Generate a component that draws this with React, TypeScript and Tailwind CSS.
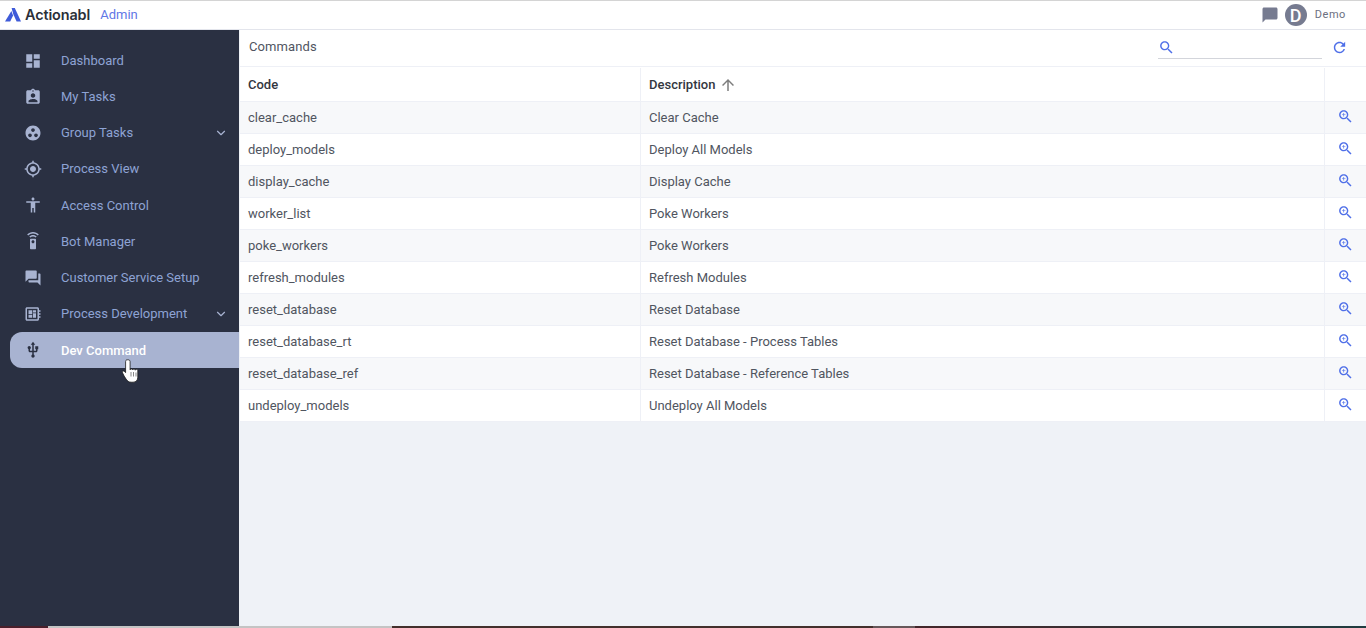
import { ChevronDown } from 'lucide-react';

const ICONS = {
  dashboard: 'M3 13h8V3H3v10zm0 8h8v-6H3v6zm10 0h8V11h-8v10zm0-18v6h8V3h-8z',
  assignment:
    'M19 3h-4.18C14.4 1.84 13.3 1 12 1c-1.3 0-2.4.84-2.82 2H5c-1.1 0-2 .9-2 2v14c0 1.1.9 2 2 2h14c1.1 0 2-.9 2-2V5c0-1.1-.9-2-2-2zm-7 0c.55 0 1 .45 1 1s-.45 1-1 1-1-.45-1-1 .45-1 1-1zm0 4c1.66 0 3 1.34 3 3s-1.34 3-3 3-3-1.34-3-3 1.34-3 3-3zm6 12H6v-1.4c0-2 4-3.1 6-3.1s6 1.1 6 3.1V19z',
  groupWork:
    'M12 2C6.48 2 2 6.48 2 12s4.48 10 10 10 10-4.48 10-10S17.52 2 12 2zM8 17.5c-1.38 0-2.5-1.12-2.5-2.5s1.12-2.5 2.5-2.5 2.5 1.12 2.5 2.5-1.12 2.5-2.5 2.5zM9.5 8c0-1.38 1.12-2.5 2.5-2.5s2.5 1.12 2.5 2.5-1.12 2.5-2.5 2.5S9.5 9.38 9.5 8zm6.5 9.5c-1.38 0-2.5-1.12-2.5-2.5s1.12-2.5 2.5-2.5 2.5 1.12 2.5 2.5-1.12 2.5-2.5 2.5z',
  gps: 'M12 8c-2.21 0-4 1.79-4 4s1.79 4 4 4 4-1.79 4-4-1.79-4-4-4zm8.94 3c-.46-4.17-3.77-7.48-7.94-7.94V1h-2v2.06C6.83 3.52 3.52 6.83 3.06 11H1v2h2.06c.46 4.17 3.77 7.48 7.94 7.94V23h2v-2.06c4.17-.46 7.48-3.77 7.94-7.94H23v-2h-2.06zM12 19c-3.87 0-7-3.13-7-7s3.13-7 7-7 7 3.13 7 7-3.13 7-7 7z',
  accessibility: 'M12 2c1.1 0 2 .9 2 2s-.9 2-2 2-2-.9-2-2 .9-2 2-2zm9 7h-6v13h-2v-6h-2v6H9V9H3V7h18v2z',
  remote:
    'M15 9H9c-.55 0-1 .45-1 1v12c0 .55.45 1 1 1h6c.55 0 1-.45 1-1V10c0-.55-.45-1-1-1zm-3 6c-1.1 0-2-.9-2-2s.9-2 2-2 2 .9 2 2-.9 2-2 2zM7.05 6.05l1.41 1.41C9.37 6.56 10.62 6 12 6s2.63.56 3.54 1.46l1.41-1.41C15.68 4.78 13.93 4 12 4s-3.68.78-4.95 2.05zM12 0C8.96 0 6.21 1.23 4.22 3.22l1.41 1.41C7.26 3.01 9.51 2 12 2s4.74 1.01 6.36 2.64l1.41-1.41C17.79 1.23 15.04 0 12 0z',
  forum:
    'M21 6h-2v9H6v2c0 .55.45 1 1 1h11l4 4V7c0-.55-.45-1-1-1zm-4 6V3c0-.55-.45-1-1-1H3c-.55 0-1 .45-1 1v14l4-4h10c.55 0 1-.45 1-1z',
  board:
    'M22 9V7h-2V5c0-1.1-.9-2-2-2H4c-1.1 0-2 .9-2 2v14c0 1.1.9 2 2 2h14c1.1 0 2-.9 2-2v-2h2v-2h-2v-2h2v-2h-2V9h2zm-4 10H4V5h14v14zM6 13h5v4H6zm6-6h4v3h-4zM6 7h5v5H6zm6 4h4v6h-4z',
  usb: 'M15 7v4h1v2h-3V5h2l-3-4-3 4h2v8H8v-2.07c.7-.37 1.2-1.08 1.2-1.93 0-1.21-.99-2.2-2.2-2.2-1.21 0-2.2.99-2.2 2.2 0 .85.5 1.56 1.2 1.93V13c0 1.11.89 2 2 2h3v3.05c-.71.37-1.2 1.1-1.2 1.95 0 1.22.99 2.2 2.2 2.2 1.21 0 2.2-.98 2.2-2.2 0-.85-.49-1.58-1.2-1.95V15h3c1.11 0 2-.89 2-2v-2h1V7h-4z',
  chat: 'M20 2H4c-1.1 0-2 .9-2 2v18l4-4h14c1.1 0 2-.9 2-2V4c0-1.1-.9-2-2-2z',
  search:
    'M15.5 14h-.79l-.28-.27C15.41 12.59 16 11.11 16 9.5 16 5.91 13.09 3 9.5 3S3 5.91 3 9.5 5.91 16 9.5 16c1.61 0 3.09-.59 4.23-1.57l.27.28v.79l5 4.99L20.49 19l-4.99-5zm-6 0C7.01 14 5 11.99 5 9.5S7.01 5 9.5 5 14 7.01 14 9.5 11.99 14 9.5 14z',
  zoomIn:
    'M15.5 14h-.79l-.28-.27C15.41 12.59 16 11.11 16 9.5 16 5.91 13.09 3 9.5 3S3 5.91 3 9.5 5.91 16 9.5 16c1.61 0 3.09-.59 4.23-1.57l.27.28v.79l5 4.99L20.49 19l-4.99-5zm-6 0C7.01 14 5 11.99 5 9.5S7.01 5 9.5 5 14 7.01 14 9.5 11.99 14 9.5 14zM12 10h-2v2H9v-2H7V9h2V7h1v2h2v1z',
  refresh:
    'M17.65 6.35C16.2 4.9 14.21 4 12 4c-4.42 0-7.99 3.58-7.99 8s3.57 8 7.99 8c3.73 0 6.84-2.55 7.73-6h-2.08c-.82 2.33-3.04 4-5.65 4-3.31 0-6-2.69-6-6s2.69-6 6-6c1.66 0 3.14.69 4.22 1.78L13 11h7V4l-2.35 2.35z',
  arrowUp: 'M4 12l1.41 1.41L11 7.83V20h2V7.83l5.58 5.59L20 12l-8-8-8 8z',
};

const Icon = ({ d, className }: { d: string; className: string }) => (
  <svg viewBox="0 0 24 24" fill="currentColor" className={className}>
    <path d={d} />
  </svg>
);

const navItems = [
  { label: 'Dashboard', icon: ICONS.dashboard },
  { label: 'My Tasks', icon: ICONS.assignment },
  { label: 'Group Tasks', icon: ICONS.groupWork, expand: true },
  { label: 'Process View', icon: ICONS.gps },
  { label: 'Access Control', icon: ICONS.accessibility },
  { label: 'Bot Manager', icon: ICONS.remote },
  { label: 'Customer Service Setup', icon: ICONS.forum },
  { label: 'Process Development', icon: ICONS.board, expand: true },
  { label: 'Dev Command', icon: ICONS.usb, active: true },
];

const commands = [
  ['clear_cache', 'Clear Cache'],
  ['deploy_models', 'Deploy All Models'],
  ['display_cache', 'Display Cache'],
  ['worker_list', 'Poke Workers'],
  ['poke_workers', 'Poke Workers'],
  ['refresh_modules', 'Refresh Modules'],
  ['reset_database', 'Reset Database'],
  ['reset_database_rt', 'Reset Database - Process Tables'],
  ['reset_database_ref', 'Reset Database - Reference Tables'],
  ['undeploy_models', 'Undeploy All Models'],
];

const App = () => {
  return (
    <div className="h-[628px] w-[1366px] overflow-hidden flex flex-col bg-[#eff2f7] font-['Roboto',sans-serif] text-[13px]">
      {/* Top bar */}
      <header className="h-[30px] shrink-0 flex items-center justify-between bg-white border-t border-t-[#d4d4d4] border-b border-b-[#e3e5ec] pl-[5px] pr-[20px]">
        <div className="flex items-center">
          <svg viewBox="0 0 16 14" className="w-[16px] h-[14px] text-[#3f5bd9]" fill="currentColor">
            <path d="M6.6 0h3.2L16 13.6h-4.4L8.2 6 6.6 0z" />
            <path d="M6.4 3l1.7 4.4L5.2 13.6H0L6.4 3z" />
          </svg>
          <span className="ml-[4px] font-['Inter',sans-serif] text-[14.4px] font-semibold tracking-[-0.1px] text-[#2b2f38]">
            Actionabl
          </span>
          <span className="ml-[10px] text-[13px] text-[#5f77e6]">Admin</span>
        </div>
        <div className="flex items-center">
          <Icon d={ICONS.chat} className="w-[18px] h-[18px] text-[#767b90]" />
          <div className="ml-[6px] w-[22px] h-[22px] rounded-full bg-[#767b90] flex items-center justify-center text-white text-[18px] font-medium">
            D
          </div>
          <span className="ml-[8px] text-[11px] tracking-[0.6px] text-[#6b7080]">Demo</span>
        </div>
      </header>

      <div className="flex-1 flex min-h-0">
        {/* Sidebar */}
        <aside className="w-[239px] shrink-0 bg-[#2a3042] pt-[12.7px] pl-[10px]">
          {navItems.map((item) => (
            <div
              key={item.label}
              className={`relative h-[36.15px] flex items-center pl-[14px] pr-[11px] ${
                item.active ? 'bg-[#a8b3d1] rounded-l-[12px] text-white pt-[1px]' : 'text-[#8ea3d4]'
              }`}
            >
              <Icon
                d={item.icon}
                className={`w-[18px] h-[18px] shrink-0 ${item.active ? 'text-[#2a3042]' : 'text-[#a8b3d1]'}`}
              />
              <span className={`ml-[19px] flex-1 ${item.active ? 'font-medium' : ''}`}>{item.label}</span>
              {item.expand && <ChevronDown className="w-[14px] h-[14px] text-[#a8b3d1]" />}
              {item.active && (
                <svg viewBox="0 0 17 25" className="absolute left-[112px] top-[27px] w-[17px] h-[25px]">
                  <path
                    d="M5.2.8C4.1.8 3.6 1.6 3.6 2.6v11l-1.3-1.2c-1-.8-2.5 0-1.8 1.4 1 2.3 2.2 4.4 3.6 6.3 1.3 1.9 2.6 3.1 5 3.1h2c2.9 0 4.7-2.1 4.7-5v-6.6c0-1.6-2.2-1.8-2.5-.4-.2-1.5-2.4-1.7-2.6-.2-.2-1.3-2.3-1.5-2.6-.2V2.6c0-1-.8-1.8-1.9-1.8z"
                    fill="#fff"
                    stroke="#1c1c1c"
                    strokeWidth="0.8"
                  />
                  <path d="M9 13v4.5M11.5 13v4.5M14 13.5v4" stroke="#555" strokeWidth="0.7" />
                </svg>
              )}
            </div>
          ))}
        </aside>

        {/* Content */}
        <main className="flex-1 min-w-0 pl-px">
          <div className="bg-white">
            <div className="h-[37px] flex items-center justify-between pl-[9px] pr-[18px] pb-[2px] border-b border-[#eef0f6]">
              <span className="text-[#50555f] tracking-[0.1px]">Commands</span>
              <div className="flex items-center">
                <div className="w-[164px] h-[22px] mt-[2px] flex items-center border-b border-[#d3d5db]">
                  <Icon d={ICONS.search} className="w-[17px] h-[17px] text-[#4f6fe8]" />
                </div>
                <Icon d={ICONS.refresh} className="ml-[9px] w-[17px] h-[17px] text-[#4f6fe8]" />
              </div>
            </div>
            <div className="grid grid-cols-[401px_684px_1fr] h-[35px] pt-[1px] items-stretch border-b border-[#eef0f6] font-medium text-[#33373f]">
              <div className="flex items-center pl-[8px] border-r border-[#eef0f6]">Code</div>
              <div className="flex items-center pl-[8px] border-r border-[#eef0f6]">
                Description
                <Icon d={ICONS.arrowUp} className="ml-[4px] w-[18px] h-[18px] text-[#7d7d7d]" />
              </div>
              <div />
            </div>
            {commands.map(([code, description], i) => (
              <div
                key={code}
                className={`grid grid-cols-[401px_684px_1fr] h-[32px] items-stretch border-b border-[#eef0f6] text-[#50555f] ${
                  i % 2 === 0 ? 'bg-[#f7f8fa]' : 'bg-white'
                }`}
              >
                <div className="flex items-center pl-[8px] border-r border-[#eef0f6]">{code}</div>
                <div className="flex items-center pl-[8px] border-r border-[#eef0f6]">{description}</div>
                <div className="flex items-center justify-center pr-[1px] pb-[3px]">
                  <Icon d={ICONS.zoomIn} className="w-[17px] h-[17px] text-[#4f6fe8]" />
                </div>
              </div>
            ))}
          </div>
        </main>
      </div>

      {/* Strip of the window behind, at the very bottom */}
      <div className="h-[2px] shrink-0 flex">
        <div className="w-[48px] bg-[#4a1f2b]" />
        <div className="w-[344px] bg-[#c4c4c4]" />
        <div className="w-[481px] bg-[#43302c]" />
        <div className="w-[42px] bg-[#66585a]" />
        <div className="flex-1 bg-gradient-to-r from-[#43262a] to-[#1f3c40]" />
      </div>
    </div>
  );
};

export default App;
